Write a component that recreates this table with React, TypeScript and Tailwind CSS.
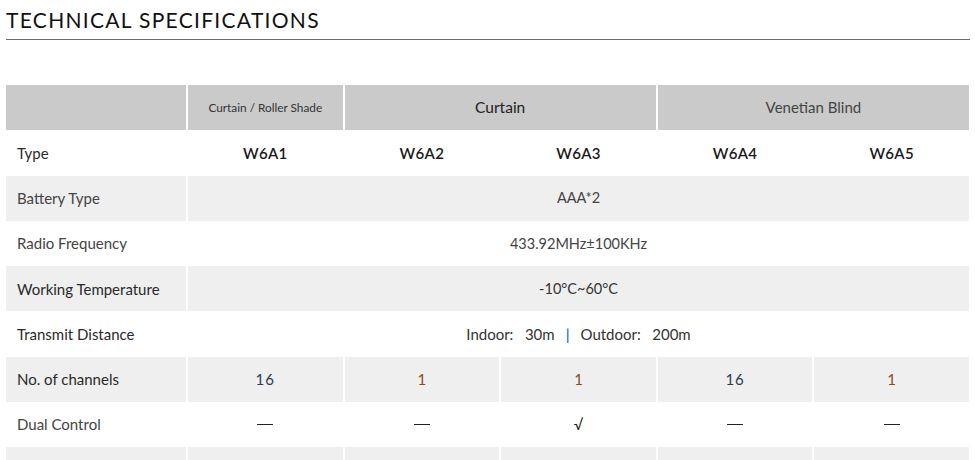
import React from "react";

const gray = "bg-[#efefef]";
const head = "bg-[#c9cac9]";

function Cell({ children, className = "", span = 1 }: { children?: React.ReactNode; className?: string; span?: number }) {
  const spanCls = span === 5 ? "col-span-5" : span === 2 ? "col-span-2" : "";
  return (
    <div className={`flex items-center justify-center ${spanCls} ${className}`}>{children}</div>
  );
}

function Label({ children, className = "" }: { children: React.ReactNode; className?: string }) {
  return <div className={`flex items-center pl-[11px] text-[15px] text-[#2a2a2a] ${className}`}>{children}</div>;
}

export default function App() {
  const dash = <span className="inline-block w-[16px] h-[1.5px] bg-[#222]" />;
  return (
    <div className="w-[975px] h-[460px] bg-white overflow-hidden" style={{ fontFamily: "Lato, 'Open Sans', sans-serif" }}>
      <div className="pl-[6px] pr-[5px] pt-[6px]">
        <h1 className="text-[21px] leading-[28px] text-[#111] tracking-[1.3px]">TECHNICAL SPECIFICATIONS</h1>
        <div className="mt-[5px] h-px bg-[#6b6b6b]" />
      </div>
      <div className="ml-[6px] mt-[45px] w-[963px] grid grid-cols-[180px_repeat(5,1fr)] gap-x-[2px] auto-rows-[45.3px] text-[#333]">
        {/* header */}
        <div className={head} />
        <Cell className={`${head} text-[11.8px] text-[#333]`}>Curtain / Roller Shade</Cell>
        <Cell span={2} className={`${head} text-[15.5px] text-[#222]`}>Curtain</Cell>
        <Cell span={2} className={`${head} text-[15px] text-[#444]`}>Venetian Blind</Cell>

        {/* Type */}
        <Label>Type</Label>
        {["W6A1", "W6A2", "W6A3", "W6A4", "W6A5"].map((t) => (
          <Cell key={t} className="text-[15px] font-semibold text-[#1a1a1a] tracking-[0.3px]">{t}</Cell>
        ))}

        {/* Battery */}
        <Label className={`${gray} text-[#444]`}>Battery Type</Label>
        <Cell span={5} className={`${gray} text-[14.5px] text-[#444]`}>AAA*2</Cell>

        {/* Radio */}
        <Label className="text-[#444]">Radio Frequency</Label>
        <Cell span={5} className="text-[14.5px] text-[#444]">433.92MHz±100KHz</Cell>

        {/* Working temp */}
        <Label className={gray}>Working Temperature</Label>
        <Cell span={5} className={`${gray} text-[14.5px] text-[#333]`}>-10°C~60°C</Cell>

        {/* Transmit */}
        <Label>Transmit Distance</Label>
        <Cell span={5} className="text-[15px] text-[#333]">
          <span>Indoor:&nbsp;&nbsp;&nbsp;30m</span>
          <span className="mx-[11px] text-[#1f6fc0] font-semibold">|</span>
          <span>Outdoor:&nbsp;&nbsp;&nbsp;200m</span>
        </Cell>

        {/* Channels */}
        <Label className={gray}>No. of channels</Label>
        <Cell className={`${gray} text-[15px] text-[#2d3a4f] tracking-[1px]`}>16</Cell>
        <Cell className={`${gray} text-[15px] text-[#8a4a1e]`}>1</Cell>
        <Cell className={`${gray} text-[15px] text-[#8a4a1e]`}>1</Cell>
        <Cell className={`${gray} text-[15px] text-[#2d3a4f] tracking-[1px]`}>16</Cell>
        <Cell className={`${gray} text-[15px] text-[#8a4a1e]`}>1</Cell>

        {/* Dual control */}
        <Label className="text-[#444]">Dual Control</Label>
        <Cell>{dash}</Cell>
        <Cell>{dash}</Cell>
        <Cell className="text-[15px] text-[#222]">√</Cell>
        <Cell>{dash}</Cell>
        <Cell>{dash}</Cell>

        {/* partial row */}
        <div className={gray} />
        <div className={gray} />
        <div className={gray} />
        <div className={gray} />
        <div className={gray} />
        <div className={gray} />
      </div>
    </div>
  );
}
